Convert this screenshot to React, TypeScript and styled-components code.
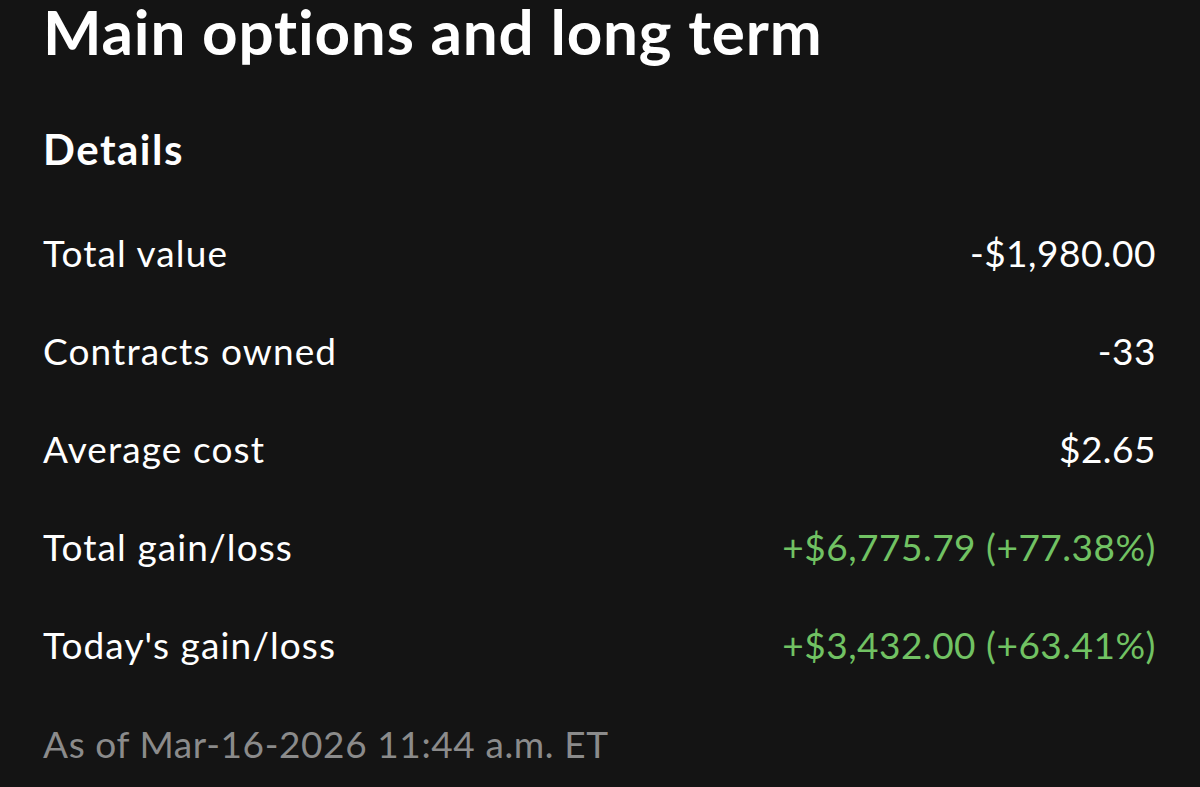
import styled, { createGlobalStyle } from 'styled-components'

const GlobalStyle = createGlobalStyle`
  html, body {
    margin: 0;
    padding: 0;
    background: #141414;
  }
  body {
    font-family: Lato, "Open Sans", sans-serif;
    -webkit-font-smoothing: antialiased;
  }
`

const Screen = styled.main`
  width: 1200px;
  height: 787px;
  box-sizing: border-box;
  padding: 0 44px 0 43px;
  background: #141414;
  color: #ffffff;
  overflow: hidden;
  display: flex;
  flex-direction: column;
`

const Title = styled.h1`
  margin: 0;
  font-size: 62px;
  font-weight: 700;
  line-height: 62px;
  letter-spacing: 0.8px;
`

const SectionTitle = styled.h2`
  margin: 57px 0 0;
  font-size: 42px;
  font-weight: 700;
  line-height: 60px;
  letter-spacing: 1.5px;
`

const List = styled.div`
  display: flex;
  flex-direction: column;
  margin-top: 25px;
`

const Row = styled.div`
  display: flex;
  justify-content: space-between;
  align-items: center;
  height: 98px;
  font-size: 37px;
  line-height: 44px;
`

const Label = styled.span`
  color: #ffffff;
  letter-spacing: 1.1px;
`

const Value = styled.span<{ $positive?: boolean }>`
  color: ${p => (p.$positive ? '#71c263' : '#ffffff')};
  letter-spacing: 0.5px;
`

const Footnote = styled.p`
  margin: 0;
  height: 98px;
  display: flex;
  align-items: center;
  font-size: 37px;
  letter-spacing: 0.6px;
  color: #8b8b8b;
`

const rows = [
  { label: 'Total value', value: '-$1,980.00' },
  { label: 'Contracts owned', value: '-33' },
  { label: 'Average cost', value: '$2.65' },
  { label: 'Total gain/loss', value: '+$6,775.79 (+77.38%)', positive: true },
  { label: "Today's gain/loss", value: '+$3,432.00 (+63.41%)', positive: true },
]

export default function App() {
  return (
    <>
      <GlobalStyle />
      <Screen>
        <Title>Main options and long term</Title>
        <SectionTitle>Details</SectionTitle>
        <List>
          {rows.map(r => (
            <Row key={r.label}>
              <Label>{r.label}</Label>
              <Value $positive={r.positive}>{r.value}</Value>
            </Row>
          ))}
          <Footnote>As of Mar-16-2026 11:44 a.m. ET</Footnote>
        </List>
      </Screen>
    </>
  )
}
